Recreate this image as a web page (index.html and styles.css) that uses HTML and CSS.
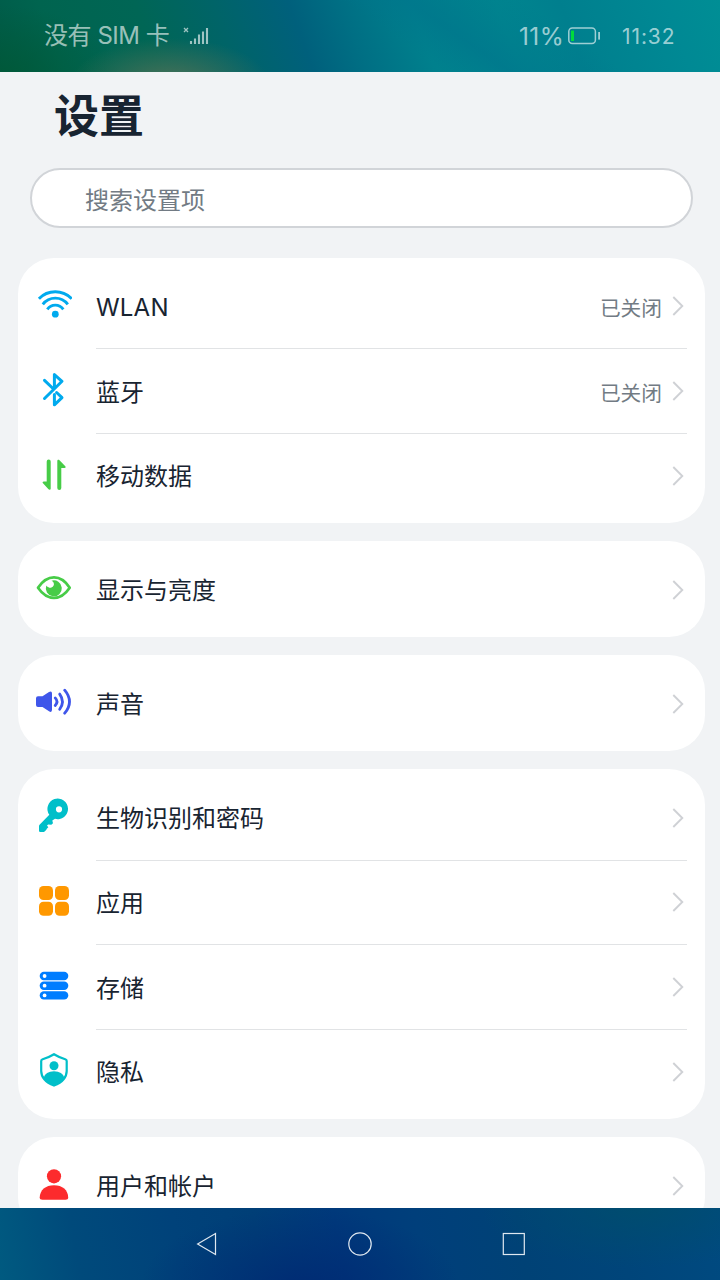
FILE: index.html
```html
<!DOCTYPE html>
<html lang="zh-CN">
<head>
<meta charset="utf-8">
<title>设置</title>
<link rel="stylesheet" href="styles.css">
</head>
<body>
<div class="screen">
  <header class="status">
    <div class="status-left">
      <span class="carrier">没有 SIM 卡</span>
      <svg class="signal" width="26" height="18" viewBox="0 0 26 18"><path d="M1 1l4 4M5 1l-4 4" stroke="currentColor" stroke-width="1.3"/><path d="M8 14v3M12 11.5V17M16 7.5V17M20 4.5V17M24 1V17" stroke="currentColor" stroke-width="2.1"/></svg>
    </div>
    <div class="status-right">
      <span class="percent">11%</span>
      <svg class="battery" width="33" height="18" viewBox="0 0 33 18"><rect x=".8" y="1" width="26.6" height="15.4" rx="3.5" fill="none" stroke="currentColor" stroke-width="1.5"/><rect x="30.2" y="5" width="1.8" height="7.6" fill="currentColor"/><rect x="3" y="3.6" width="3" height="10.4" fill="#00dc3c"/></svg>
      <time class="clock">11:32</time>
    </div>
  </header>

  <main class="content">
    <h1 class="title">设置</h1>
    <div class="search">搜索设置项</div>

    <section class="card">
      <div class="row">
        <svg class="icon sky" viewBox="0 0 36 36"><g fill="none" stroke="currentColor" stroke-width="2.9"><path d="M2.9 12.8A22.7 22.7 0 0 1 35.7 12.8"/><path d="M6.8 18.3A15.8 15.8 0 0 1 31.8 18.3"/><path d="M11.3 23.3A9.8 9.8 0 0 1 27.3 23.3"/></g><circle cx="19.3" cy="28.2" r="3.4" fill="currentColor"/></svg>
        <span class="label latin">WLAN</span><span class="value">已关闭</span>
        <svg class="chevron" viewBox="0 0 12 20"><path d="M1.3 1l9 9-9 9"/></svg>
      </div>
      <div class="row">
        <svg class="icon sky" viewBox="0 0 36 36"><path d="M8.5 9.3l9 8.7M8.5 27.5L26 10.3 18.4 3.6V15.5M18.4 23.5v10.3L26 26.7 20.6 21.5" fill="none" stroke="currentColor" stroke-width="3" stroke-linecap="round" stroke-linejoin="round"/></svg>
        <span class="label">蓝牙</span><span class="value">已关闭</span>
        <svg class="chevron" viewBox="0 0 12 20"><path d="M1.3 1l9 9-9 9"/></svg>
      </div>
      <div class="row">
        <svg class="icon green" viewBox="0 0 36 36"><path fill="currentColor" d="M10.7 5.4a2 2 0 0 1 4 0V32.4c0 1.3-1.3 1.7-2.2.8L7 27.3c-.8-.9-.3-1.8.8-1.8h2.900zM25.300 32.100a2 2 0 0 1-4 0V5c0-1.300 1.300-1.700 2.200-.8L29.300 10.300c.8.9.3 1.700-.8 1.700H25.300z"/></svg>
        <span class="label">移动数据</span>
        <svg class="chevron" viewBox="0 0 12 20"><path d="M1.3 1l9 9-9 9"/></svg>
      </div>
    </section>

    <section class="card">
      <div class="row">
        <svg class="icon green" viewBox="0 0 36 36"><path d="M2 18.700Q9 8.400 18 8.400T33.700 18.700Q27 28.800 18 28.800T2 18.700Z" fill="none" stroke="currentColor" stroke-width="2.700" stroke-linejoin="round"/><path fill="currentColor" d="M15.500 11.700A8 8 0 1 1 10.300 16.600Q10.700 18 12.500 18.200A3.600 3.600 0 1 0 15.500 11.700Z"/></svg>
        <span class="label">显示与亮度</span>
        <svg class="chevron" viewBox="0 0 12 20"><path d="M1.3 1l9 9-9 9"/></svg>
      </div>
    </section>

    <section class="card">
      <div class="row">
        <svg class="icon indigo" viewBox="0 0 36 36"><path fill="currentColor" d="M2 13.300H6.500L13 9Q16 7.400 16 10.500V26.800Q16 30 13 28.300L6.500 24H2Q0 24 0 22V15.300Q0 13.300 2 13.300Z"/><g fill="none" stroke="currentColor" stroke-width="2.800" stroke-linecap="round"><path d="M19.200 14.900Q22.800 18.700 19.200 22.500"/><path d="M23.700 11.100Q29.200 18.700 23.700 26.300"/><path d="M28.700 7.200Q38.300 18.700 28.700 30.200"/></g></svg>
        <span class="label">声音</span>
        <svg class="chevron" viewBox="0 0 12 20"><path d="M1.3 1l9 9-9 9"/></svg>
      </div>
    </section>

    <section class="card">
      <div class="row">
        <svg class="icon teal" viewBox="0 0 36 36"><path fill="currentColor" fill-rule="evenodd" d="M13.300 17.800A10.300 10.300 0 1 1 19 21.800L16.300 23.500 17 26.200 15.300 27.800 12.200 27.400 11 28.500 12.300 30.200 10.800 31.700 10.200 33 8 35H4.200Q3 35 3 33.800V29.200Q3 28.200 3.800 27.400ZM26.100 12.300A3.100 3.100 0 1 0 19.900 12.300A3.100 3.100 0 1 0 26.100 12.300Z"/></svg>
        <span class="label">生物识别和密码</span>
        <svg class="chevron" viewBox="0 0 12 20"><path d="M1.3 1l9 9-9 9"/></svg>
      </div>
      <div class="row">
        <svg class="icon orange" viewBox="0 0 36 36" fill="currentColor"><rect x="3" y="4" width="14" height="14" rx="4.500"/><rect x="19" y="4" width="14" height="14" rx="4.500"/><rect x="3" y="19.800" width="14" height="14" rx="4.500"/><rect x="19" y="19.800" width="14" height="14" rx="4.500"/></svg>
        <span class="label">应用</span>
        <svg class="chevron" viewBox="0 0 12 20"><path d="M1.3 1l9 9-9 9"/></svg>
      </div>
      <div class="row">
        <svg class="icon blue" viewBox="0 0 36 36"><g fill="currentColor"><rect x="3.700" y="4.800" width="28.600" height="8.400" rx="4.200"/><rect x="3.700" y="14.500" width="28.600" height="8.400" rx="4.200"/><rect x="3.700" y="24.200" width="28.600" height="8.400" rx="4.200"/></g><g fill="#fff"><circle cx="8.600" cy="9" r="1.900"/><circle cx="8.600" cy="18.700" r="1.900"/><circle cx="8.600" cy="28.400" r="1.900"/></g></svg>
        <span class="label">存储</span>
        <svg class="chevron" viewBox="0 0 12 20"><path d="M1.3 1l9 9-9 9"/></svg>
      </div>
      <div class="row">
        <svg class="icon teal" viewBox="0 0 36 36"><path d="M18 3.200Q23 6.300 29.200 8.200Q30.700 8.700 30.700 10V20Q30.700 29.500 18 34.600Q5.200 29.500 5.200 20V10Q5.200 8.700 6.700 8.200Q13 6.300 18 3.200Z" fill="none" stroke="currentColor" stroke-width="2.200"/><circle cx="18" cy="14.700" r="4.500" fill="currentColor"/><path fill="currentColor" d="M7.500 27Q9.500 20.300 18 20.300T28.500 27Q25 32 18 34.800Q11 32 7.500 27Z"/></svg>
        <span class="label">隐私</span>
        <svg class="chevron" viewBox="0 0 12 20"><path d="M1.3 1l9 9-9 9"/></svg>
      </div>
    </section>

    <section class="card">
      <div class="row">
        <svg class="icon red" viewBox="0 0 36 36" fill="currentColor"><circle cx="18" cy="11.300" r="7.100"/><path d="M3.700 32.500C4 25 9.500 20.300 18 20.300S32 25 32.200 32.500Q32.200 34.700 29.500 34.700H6.500Q3.700 34.700 3.700 32.500Z"/></svg>
        <span class="label">用户和帐户</span>
        <svg class="chevron" viewBox="0 0 12 20"><path d="M1.3 1l9 9-9 9"/></svg>
      </div>
    </section>
  </main>

  <nav class="navbar">
    <svg viewBox="0 0 24 24"><path d="M3.600 12L21.500 1.500V22.500Z"/></svg>
    <svg viewBox="0 0 24 24"><circle cx="12" cy="12" r="11.200"/></svg>
    <svg viewBox="0 0 24 24"><rect x="1.300" y="1.500" width="21" height="21"/></svg>
  </nav>
</div>
</body>
</html>
```

FILE: styles.css
```css
* { box-sizing: border-box; }
body {
  margin: 0;
  font-family: Inter, "Noto Sans CJK SC", sans-serif;
  color: #182431;
}
.screen {
  display: flex;
  flex-direction: column;
  width: 720px;
  height: 1280px;
  overflow: hidden;
  background: #f1f3f5;
}
.status {
  flex: none;
  display: flex;
  justify-content: space-between;
  height: 72px;
  padding: 0 44px;
  color: rgba(255, 255, 255, .62);
  background:
    radial-gradient(ellipse 100px 46px at 170px 84px, rgba(84, 114, 88, .9), transparent),
    radial-gradient(ellipse 120px 75px at 0 80px, rgba(0, 88, 52, .8), transparent),
    linear-gradient(35deg, transparent 54%, rgba(0, 116, 140, .6) 62%, rgba(0, 116, 140, .3) 68%, transparent 76%),
    linear-gradient(70deg, #005a48 0, #00644f 60px, #006655 150px, #006468 225px, #00607c 295px, #006f84 345px, #00808d 410px, #00858f 490px, #007f8e 550px, #008994 650px, #009095 720px);
}
.status-left, .status-right { display: flex; align-items: center; }
.carrier { width: 126px; font-size: 24px; line-height: 72px; letter-spacing: -.45px; white-space: pre; }
.signal { margin-left: 12.500px; }
.percent { width: 45px; font-size: 24.500px; letter-spacing: .35px; }
.battery { margin-left: 4px; }
.clock { width: 54px; margin-left: 21px; font-size: 21px; letter-spacing: .9px; }
.content { flex: 1; min-height: 0; overflow: hidden; }
.title {
  margin: 0;
  padding: 16px 0 0 54px;
  height: 96px;
  font-size: 45px;
  line-height: 58px;
  font-weight: 700;
}
.search {
  width: 663px;
  height: 60px;
  margin: 0 0 30px 30px;
  padding: 3px 0 0 53px;
  border: 2px solid #d1d4d8;
  border-radius: 30px;
  background: #fff;
  color: #727b84;
  font-size: 24px;
  line-height: 56px;
}
.card {
  width: 687px;
  margin: 0 0 18px 18px;
  padding: 5.670px 18px;
  border-radius: 36px;
  background: #fff;
}
.row {
  position: relative;
  display: flex;
  align-items: center;
  height: 84.667px;
}
.row + .row::before {
  content: "";
  position: absolute;
  top: 0;
  left: 60px;
  right: 0;
  height: 1px;
  background: #e1e3e5;
}
.icon { flex: none; width: 36px; height: 36px; margin: 0 24px 3.600px 0; }
.label { flex: 1; padding-top: 4px; font-size: 24px; line-height: 36px; }
.latin { letter-spacing: .2px; }
.value { padding-top: 6px; color: #727b84; font-size: 20.700px; line-height: 30px; }
.chevron {
  width: 12px;
  height: 20px;
  margin: 1px 3px 0 10px;
  fill: none;
  stroke: #cfd1d5;
  stroke-width: 1.900;
}
.sky { color: #00aaee; }
.green { color: #47cc47; }
.indigo { color: #3f56ea; }
.teal { color: #00bfc9; }
.orange { color: #ff9800; }
.blue { color: #007dff; }
.red { color: #fc2b2d; }
.navbar {
  flex: none;
  display: flex;
  justify-content: center;
  align-items: center;
  gap: 129.700px;
  height: 72px;
  background:
    radial-gradient(ellipse 160px 80px at 300px 80px, rgba(0, 40, 115, .85), transparent),
    radial-gradient(ellipse 160px 60px at 640px 0, rgba(0, 78, 108, .8), transparent),
    linear-gradient(80deg, #005a80 0, #004a7b 80px, #00427a 180px, #003f77 260px, #00397b 340px, #003f7b 420px, #004276 520px, #00457a 620px, #004a80 720px);
}
.navbar svg { width: 24px; height: 24px; fill: none; stroke: #dfe8f0; stroke-width: 1.200; }
```
